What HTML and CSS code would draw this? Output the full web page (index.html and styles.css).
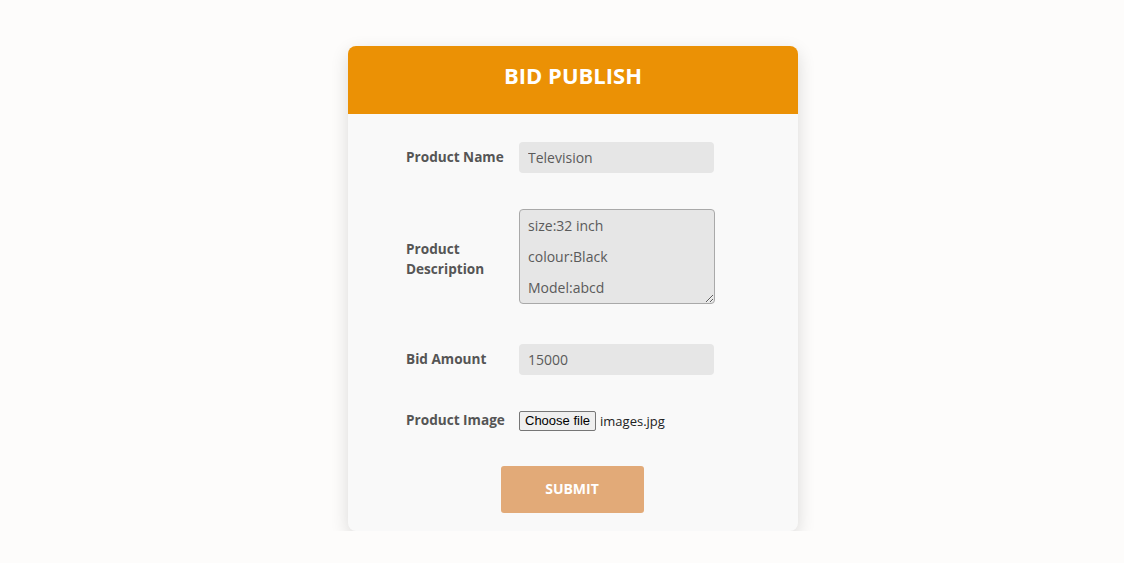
FILE: index.html
```html
<!DOCTYPE html>
<html lang="en">
<head>
<meta charset="utf-8">
<title>Bid Publish</title>
<link rel="stylesheet" href="styles.css">
</head>
<body>
<div class="page">
  <div class="card">
    <div class="card-header">BID PUBLISH</div>
    <form class="form">
      <div class="row">
        <label class="label">Product Name</label>
        <input class="field" type="text" value="Television">
      </div>
      <div class="row row-desc">
        <label class="label label-desc">Product<br>Description</label>
        <textarea class="field area" spellcheck="false">size:32 inch
colour:Black
Model:abcd</textarea>
      </div>
      <div class="row row-amount">
        <label class="label">Bid Amount</label>
        <input class="field" type="text" value="15000">
      </div>
      <div class="row row-file">
        <label class="label">Product Image</label>
        <div class="file">
          <span class="file-btn">Choose file</span>
          <span class="file-name">images.jpg</span>
        </div>
      </div>
      <div class="actions">
        <button type="button" class="submit">SUBMIT</button>
      </div>
    </form>
  </div>
</div>
</body>
</html>
```

FILE: styles.css
```css
* { box-sizing: border-box; }
html, body { margin: 0; padding: 0; }
body {
  background: #fdfcfb;
  font-family: "Open Sans", "Liberation Sans", sans-serif;
  color: #555;
}
.page {
  display: flex;
  justify-content: center;
  padding: 46px 0 0 22px;
}
.card {
  width: 450px;
  background: #f9f9f9;
  border-radius: 8px;
  box-shadow: 0 6px 18px rgba(0,0,0,0.14);
  overflow: hidden;
}
.card-header {
  height: 68px;
  background: #eb9105;
  color: #fff;
  font-weight: 700;
  font-size: 22px;
  display: flex;
  align-items: center;
  justify-content: center;
  padding-bottom: 10px;
}
.form {
  padding: 28px 84px 18px 58px;
}
.row {
  display: grid;
  grid-template-columns: 113px 195px;
  align-items: center;
}
.row-desc { margin-top: 36px; }
.row-amount { margin-top: 40px; }
.row-file { margin-top: 35px; }
.label {
  font-weight: 700;
  font-size: 13.6px;
  line-height: 19px;
  color: #555;
  padding-bottom: 2px;
}
.label-desc {
  line-height: 20px;
  padding-bottom: 0;
  padding-top: 5px;
}
.field {
  width: 195px;
  height: 31px;
  border: none;
  border-radius: 4px;
  background: #e6e6e6;
  padding: 0 9px;
  font-family: "Open Sans", "Liberation Sans", sans-serif;
  font-size: 14px;
  color: #5a5a5a;
  outline: none;
}
.area {
  width: 196px;
  height: 95px;
  border: 1px solid #a9a9a9;
  padding: 0 8px;
  line-height: 31px;
  resize: vertical;
  display: block;
}
.file {
  display: flex;
  align-items: center;
  height: 21px;
}
.file-btn {
  display: inline-block;
  height: 20px;
  padding: 0 5px;
  border: 1px solid #767676;
  border-radius: 2px;
  background: #efefef;
  color: #000;
  font-family: "Liberation Sans", Arial, sans-serif;
  font-size: 13px;
  line-height: 18px;
}
.file-name {
  margin-left: 4px;
  font-size: 13px;
  color: #222;
}
.actions {
  display: flex;
  justify-content: center;
  margin-top: 35px;
  padding-left: 24px;
}
.submit {
  width: 143px;
  height: 47px;
  border: none;
  border-radius: 3px;
  background: #e2aa78;
  color: #fff;
  font-family: "Open Sans", "Liberation Sans", sans-serif;
  font-weight: 700;
  font-size: 14px;
  padding: 0 0 2px;
}
```
